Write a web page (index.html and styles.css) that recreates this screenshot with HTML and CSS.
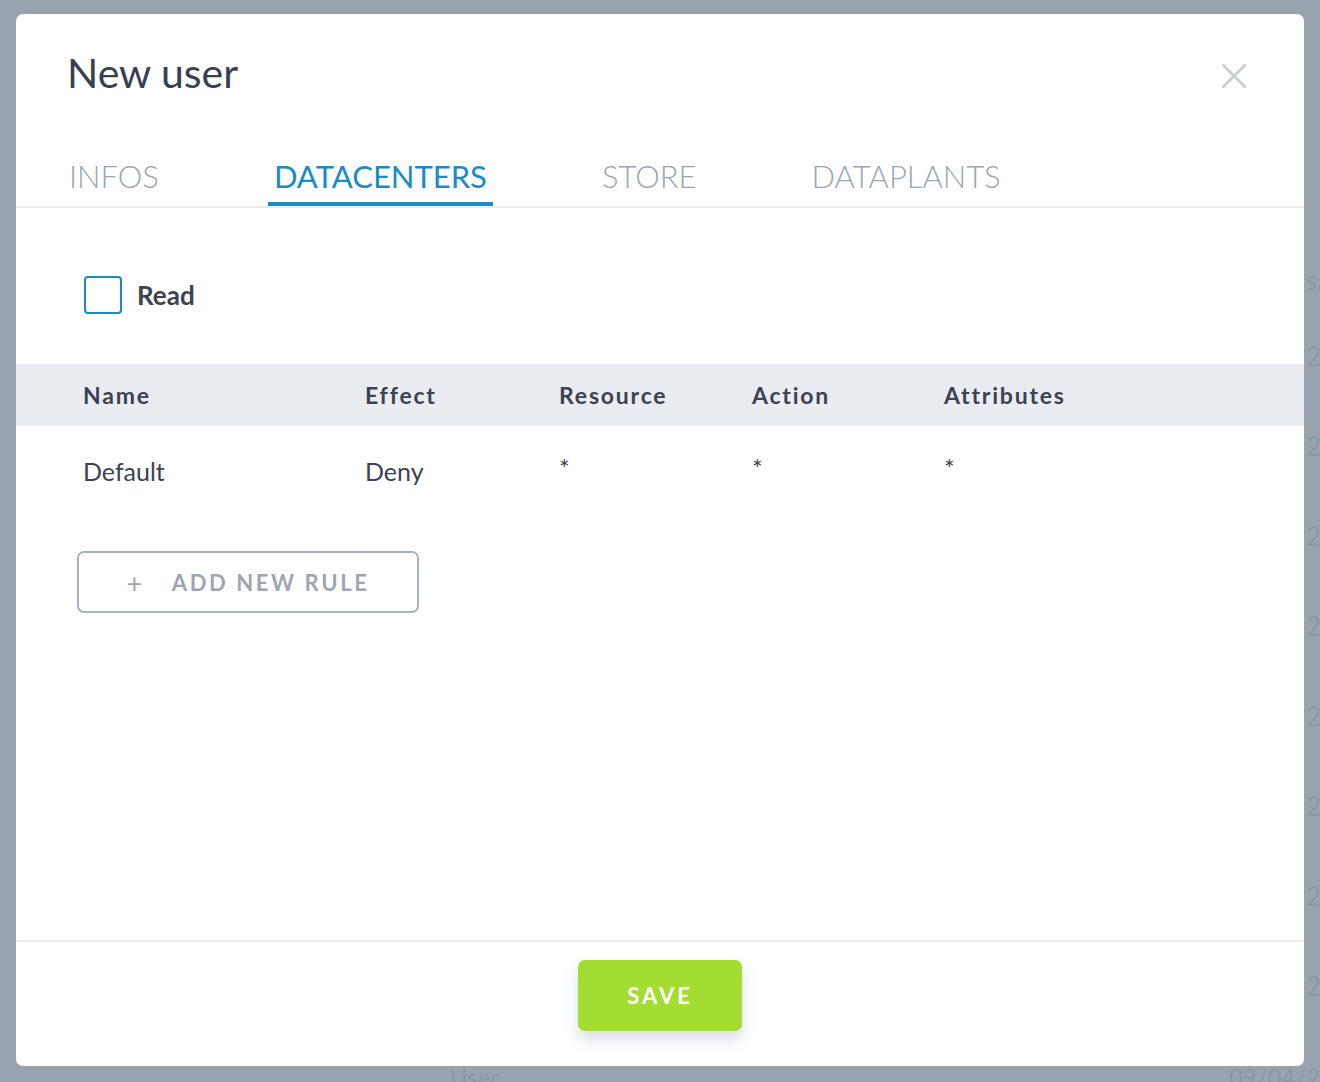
FILE: index.html
```html
<!DOCTYPE html>
<html lang="en">
<head>
<meta charset="utf-8">
<title>New user</title>
<link rel="stylesheet" href="styles.css">
</head>
<body>
<div class="bg-page">
  <div class="bg-col">
    <div class="bg-head">sa</div>
    <div class="bg-cell">2019</div>
    <div class="bg-cell">2019</div>
    <div class="bg-cell">2019</div>
    <div class="bg-cell">2019</div>
    <div class="bg-cell">2019</div>
    <div class="bg-cell">2019</div>
    <div class="bg-cell">2019</div>
    <div class="bg-cell">2019</div>
  </div>
  <div class="bg-bottom">
    <span class="bg-user">User</span>
    <span class="bg-date">09/04/2019</span>
  </div>
</div>

<div class="overlay">
  <div class="modal">
    <div class="modal-head">
      <h1 class="title">New user</h1>
      <button class="close" aria-label="Close">
        <svg width="26" height="26" viewBox="0 0 26 26"><path d="M1.5 1.5 L24.5 24.5 M24.5 1.5 L1.5 24.5" stroke="#c8d0d6" stroke-width="3" fill="none"/></svg>
      </button>
    </div>

    <div class="tabs">
      <div class="tab">INFOS</div>
      <div class="tab active">DATACENTERS</div>
      <div class="tab">STORE</div>
      <div class="tab">DATAPLANTS</div>
    </div>

    <label class="check-row">
      <span class="checkbox"></span>
      <span class="check-label">Read</span>
    </label>

    <div class="rules">
      <div class="rules-row rules-head">
        <div>Name</div>
        <div>Effect</div>
        <div>Resource</div>
        <div>Action</div>
        <div>Attributes</div>
      </div>
      <div class="rules-row rules-body">
        <div>Default</div>
        <div>Deny</div>
        <div class="star">*</div>
        <div class="star">*</div>
        <div class="star">*</div>
      </div>
    </div>

    <div class="add-wrap">
      <button class="add-btn"><span class="plus">+</span><span>ADD NEW RULE</span></button>
    </div>

    <div class="modal-foot">
      <button class="save-btn">SAVE</button>
    </div>
  </div>
</div>
</body>
</html>
```

FILE: styles.css
```css
html, body {
  margin: 0;
  padding: 0;
}
body {
  width: 1320px;
  height: 1082px;
  overflow: hidden;
  background: #98a3af;
  font-family: "Lato", "Open Sans", "Liberation Sans", sans-serif;
  position: relative;
}

/* faint page behind the overlay */
.bg-page {
  position: absolute;
  inset: 0;
  color: #8b97a4;
  font-size: 26px;
}
.bg-col {
  display: flex;
  flex-direction: column;
  padding: 264px 0 0 1306px;
}
.bg-head {
  height: 76px;
}
.bg-cell {
  height: 90px;
}
.bg-bottom {
  position: absolute;
  left: 0;
  right: 0;
  top: 1062px;
  display: flex;
  padding-left: 450px;
  font-size: 24px;
}
.bg-date {
  margin-left: 730px;
}

.overlay {
  position: absolute;
  inset: 0;
  padding: 14px 16px 16px 16px;
}

.modal {
  width: 1288px;
  height: 1052px;
  background: #fff;
  border-radius: 7px;
  display: flex;
  flex-direction: column;
  box-sizing: border-box;
}

.modal-head {
  display: flex;
  justify-content: space-between;
  align-items: flex-start;
  padding: 35px 57px 0 51px;
}
.title {
  margin: 0;
  font-size: 41px;
  line-height: 48px;
  font-weight: 400;
  color: #384050;
}
.close {
  border: 0;
  background: none;
  padding: 0;
  margin-top: 14px;
  width: 26px;
  height: 26px;
  cursor: pointer;
}

.tabs {
  display: flex;
  gap: 103px;
  padding-left: 47px;
  margin-top: 59px;
  border-bottom: 2px solid #e9edf1;
}
.tab {
  padding: 0 6px 6px;
  font-size: 31px;
  line-height: 40px;
  font-weight: 300;
  color: #99a5b2;
  border-bottom: 4px solid transparent;
}
.tab.active {
  color: #1a8bc5;
  font-weight: 400;
  border-bottom-color: #1a8bc5;
}

.check-row {
  display: flex;
  align-items: center;
  margin: 68px 0 0 68px;
}
.checkbox {
  width: 38px;
  height: 38px;
  box-sizing: border-box;
  border: 2px solid #1a8bc5;
  border-radius: 4px;
}
.check-label {
  margin-left: 15px;
  font-size: 26px;
  font-weight: 700;
  color: #3b4352;
}

.rules {
  margin-top: 50px;
}
.rules-row {
  display: grid;
  grid-template-columns: 282px 194px 193px 192px 1fr;
  padding-left: 67px;
  align-items: center;
}
.rules-head {
  height: 62px;
  background: #e9ecf0;
  font-size: 23px;
  font-weight: 700;
  letter-spacing: 1.8px;
  color: #3b4352;
}
.rules-body {
  height: 90px;
  font-size: 25px;
  color: #3b4352;
}
.star {
  font-size: 25px;
  margin-top: -6px;
}

.add-wrap {
  padding: 35px 0 0 61px;
}
.add-btn {
  width: 342px;
  height: 62px;
  box-sizing: border-box;
  border: 2px solid #a7b2bd;
  border-radius: 7px;
  background: #fff;
  display: flex;
  align-items: center;
  justify-content: center;
  font-family: inherit;
  font-size: 22px;
  font-weight: 700;
  letter-spacing: 2.6px;
  color: #9ba7b4;
  cursor: pointer;
}
.plus {
  font-weight: 400;
  font-size: 27px;
  margin-right: 27px;
}

.modal-foot {
  margin-top: auto;
  border-top: 2px solid #e9edf1;
  display: flex;
  justify-content: center;
  padding: 18px 0 35px;
}
.save-btn {
  width: 164px;
  height: 71px;
  border: 0;
  border-radius: 7px;
  background: #a3dd31;
  color: #fff;
  font-family: inherit;
  font-size: 22px;
  font-weight: 700;
  letter-spacing: 3px;
  box-shadow: 0 8px 14px rgba(150, 160, 185, 0.35);
  cursor: pointer;
}
```
